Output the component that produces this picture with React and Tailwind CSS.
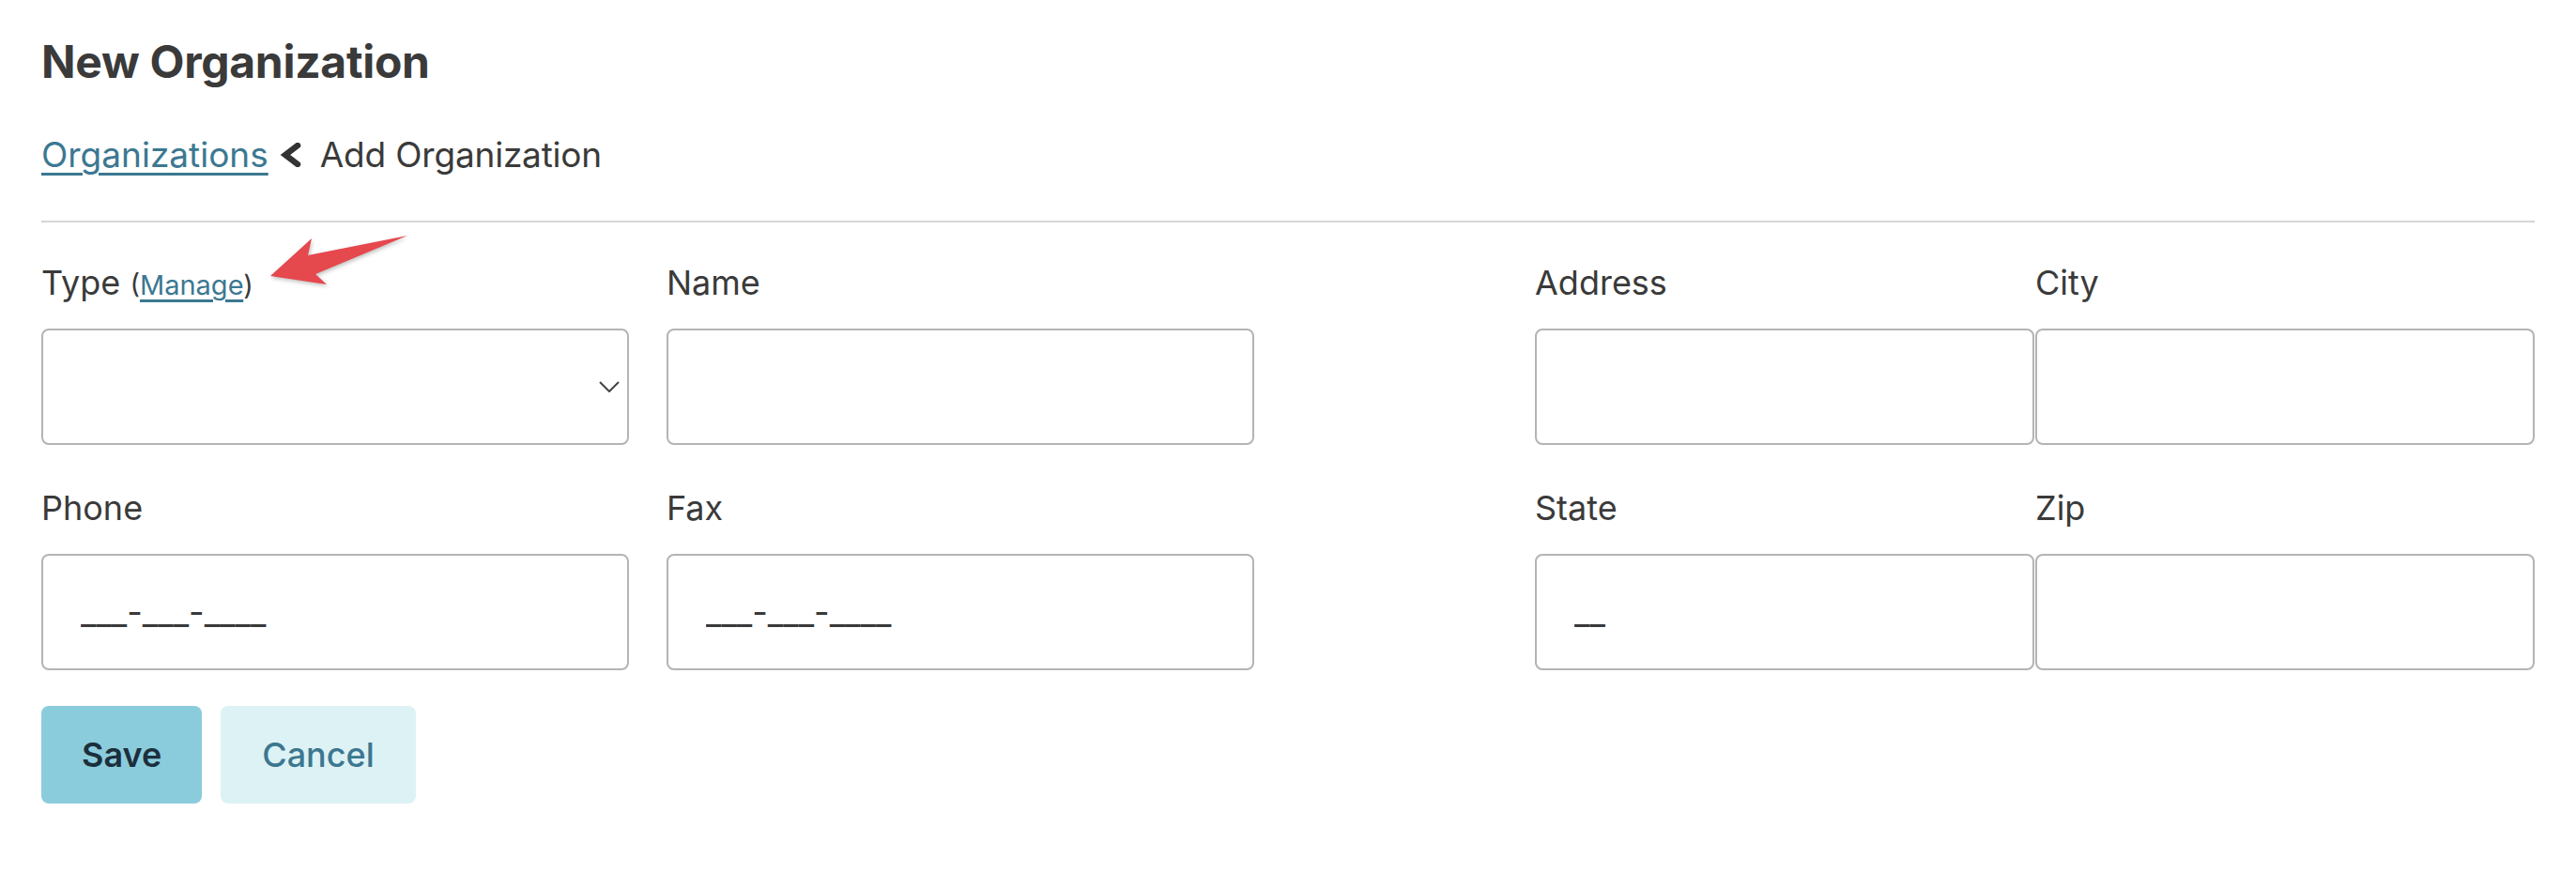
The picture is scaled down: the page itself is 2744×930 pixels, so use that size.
import React from 'react';

const BOX = 'h-[124px] rounded-[8px] border-2 border-[#b4b4b4] bg-white';

function Field({ label, width, children, className = '' }) {
  return (
    <div className={`flex flex-col ${width} ${className}`}>
      <div className="h-[44px] leading-[44px] text-[36px] text-[#3a3a3a] whitespace-nowrap">{label}</div>
      <div className="mt-[27px]">{children}</div>
    </div>
  );
}

function MaskInput({ value }) {
  return (
    <input
      readOnly
      value={value}
      className={`${BOX} w-full px-[40px] text-[36px] text-[#3a3a3a] font-['Inter',sans-serif] outline-none`}
    />
  );
}

function Row({ items }) {
  return (
    <div className="flex">
      <div className="flex gap-[40px]">
        {items.slice(0, 2)}
      </div>
      <div className="flex gap-[1px] ml-[299px]">
        {items.slice(2)}
      </div>
    </div>
  );
}

export default function App() {
  return (
    <div className="relative min-h-[930px] bg-white px-[44px] pt-[36px] font-['Inter',sans-serif] text-[#3a3a3a]">
      <h1 className="text-[48px] leading-[60px] font-bold tracking-[-0.3px] text-[#3a3a3a]">New Organization</h1>

      <nav className="mt-[47px] flex items-center h-[44px] text-[37px] leading-[44px]">
        <a href="#" className="text-[#3c7891] underline decoration-[3px] underline-offset-[6px]">Organizations</a>
        <svg className="ml-[12px] mr-[19px]" width="24" height="26" viewBox="0 0 24 26">
          <polyline points="19,3 6,13 19,23" fill="none" stroke="#333" strokeWidth="6.5" strokeLinecap="round" strokeLinejoin="miter" />
        </svg>
        <span className="tracking-[-0.2px]">Add Organization</span>
      </nav>

      <hr className="mt-[48px] border-0 h-[2px] bg-[#d6d6d6]" />

      <div className="mt-[42px]">
        <Row
          items={[
            <Field
              key="type"
              width="w-[626px]"
              label={
                <span>
                  Type{' '}
                  <span className="text-[29px]">
                    (<a href="#" className="text-[#3c7891] underline decoration-[3px] underline-offset-[5px]">Manage</a>)
                  </span>
                </span>
              }
            >
              <div className={`${BOX} w-full flex items-center justify-end pr-[8px]`}>
                <svg width="22" height="12" viewBox="0 0 22 12">
                  <polyline points="1,1 11,11 21,1" fill="none" stroke="#444" strokeWidth="2" />
                </svg>
              </div>
            </Field>,
            <Field key="name" width="w-[626px]" label="Name">
              <div className={`${BOX} w-full`} />
            </Field>,
            <Field key="address" width="w-[532px]" label="Address">
              <div className={`${BOX} w-full`} />
            </Field>,
            <Field key="city" width="w-[532px]" label="City">
              <div className={`${BOX} w-full`} />
            </Field>,
          ]}
        />
      </div>

      <div className="mt-[45px]">
        <Row
          items={[
            <Field key="phone" width="w-[626px]" label="Phone">
              <MaskInput value="___-___-____" />
            </Field>,
            <Field key="fax" width="w-[626px]" label="Fax">
              <MaskInput value="___-___-____" />
            </Field>,
            <Field key="state" width="w-[532px]" label="State">
              <MaskInput value="__" />
            </Field>,
            <Field key="zip" width="w-[532px]" label="Zip">
              <div className={`${BOX} w-full`} />
            </Field>,
          ]}
        />
      </div>

      <div className="mt-[38px] flex gap-[20px]">
        <button className="h-[104px] px-[43px] rounded-[8px] bg-[#8bccdc] text-[36px] font-semibold text-[#1c2f3c]">Save</button>
        <button className="h-[104px] px-[44px] rounded-[8px] bg-[#ddf2f5] text-[36px] font-medium text-[#3c7790]">Cancel</button>
      </div>

      <svg
        className="absolute left-[285px] top-[248px] drop-shadow-[1px_2px_2px_rgba(0,0,0,0.25)]"
        width="152"
        height="58"
        viewBox="0 0 152 58"
      >
        <polygon points="3,46 47,6 43,24 149,3 51,44 63,55" fill="#e5484d" />
      </svg>
    </div>
  );
}
